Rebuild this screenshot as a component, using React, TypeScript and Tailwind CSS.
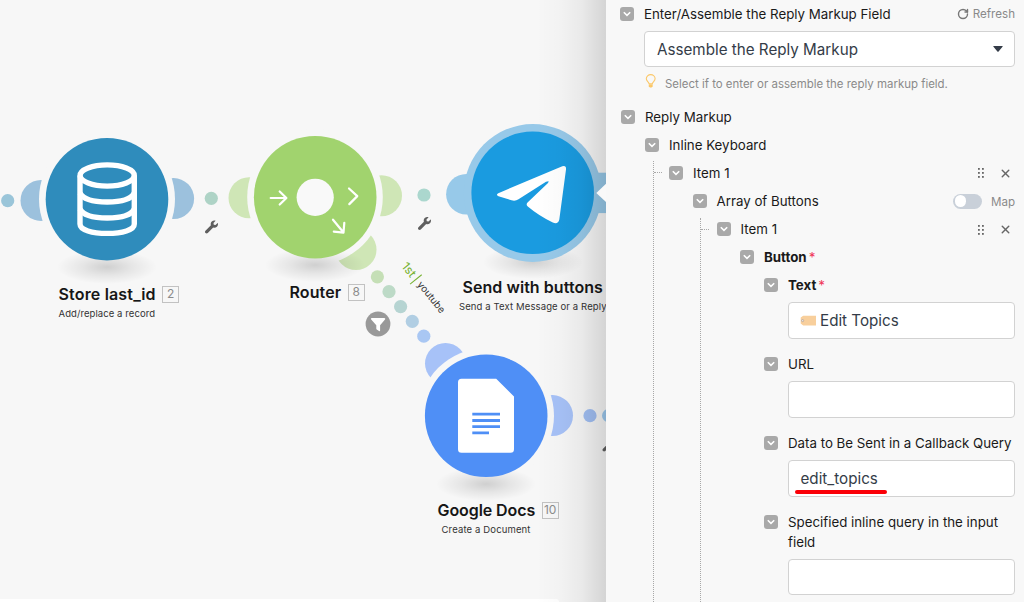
import React, { useState } from 'react';
import { X, RotateCw } from 'lucide-react';

interface ScenarioModule {
  id: number;
  name: string;
  note?: string;
  badge?: string;
  // position of the title block on the canvas
  labelClass: string;
  titleClass: string;
  noteClass?: string;
}

const modules: ScenarioModule[] = [
  {
    id: 2,
    name: 'Store last_id',
    note: 'Add/replace a record',
    badge: '2',
    labelClass: 'left-[58.5px] top-[284px]',
    titleClass: 'tracking-[0.17px]',
    noteClass: 'tracking-[0.08px]',
  },
  { id: 8, name: 'Router', badge: '8', labelClass: 'left-[289.5px] top-[282px]', titleClass: 'tracking-[0.1px]' },
  {
    id: 9,
    name: 'Send with buttons',
    note: 'Send a Text Message or a Reply',
    labelClass: 'left-[459px] top-[277px]',
    titleClass: 'pl-[3.5px] tracking-[0.05px]',
    noteClass: 'tracking-[0.12px]',
  },
  {
    id: 10,
    name: 'Google Docs',
    note: 'Create a Document',
    badge: '10',
    labelClass: 'left-[437.5px] top-[500px]',
    titleClass: 'tracking-[-0.08px]',
    noteClass: 'pl-[4px] tracking-[0.14px]',
  },
];

const dots = [
  { x: 7.7, y: 200.7, color: '#9ac5d9' },
  { x: 211.3, y: 198.3, color: '#aed3c6' },
  { x: 424, y: 195, color: '#abd7ce' },
  { x: 377.4, y: 276.8, color: '#c5dfb6' },
  { x: 389, y: 291.7, color: '#bddac7' },
  { x: 400.6, y: 306.6, color: '#b6d4d2' },
  { x: 412.3, y: 321.4, color: '#b1cee3' },
  { x: 423.8, y: 336.2, color: '#a9c7f3' },
  { x: 590, y: 415.7, color: '#a1bff3' },
  { x: 608.6, y: 415.7, color: '#9cc8ee' },
];

const Wrench = ({ x, y }: { x: number; y: number }) => (
  <g transform={`translate(${x} ${y}) scale(0.0254)`} fill="#5f5f5f">
    <path d="M507.73 109.1c-2.24-9.03-13.54-12.09-20.12-5.51l-74.36 74.36-67.88-11.31-11.31-67.88 74.36-74.36c6.62-6.62 3.43-17.9-5.66-20.16-47.38-11.74-99.55.91-136.58 37.93-39.64 39.64-50.55 97.1-34.05 147.2L18.74 402.76c-24.99 24.99-24.99 65.51 0 90.5 24.99 24.99 65.51 24.99 90.5 0l213.21-213.21c50.12 16.71 107.47 5.68 147.37-34.22 37.07-37.07 49.7-89.32 37.91-136.73z" />
  </g>
);

const Shadow = ({ x, y }: { x: number; y: number }) => (
  <ellipse cx={x} cy={y} rx={50} ry={17} fill="url(#ground)" />
);

const ScenarioDrawing = () => (
  <svg width="606" height="602" viewBox="0 0 606 602" className="block">
    <defs>
      <radialGradient id="ground">
        <stop offset="0" stopColor="#000" stopOpacity="0.16" />
        <stop offset="0.5" stopColor="#000" stopOpacity="0.07" />
        <stop offset="1" stopColor="#000" stopOpacity="0" />
      </radialGradient>
    </defs>

    {/* Data store */}
    <circle cx={41} cy={200.4} r={20.5} fill="#9cc1dd" />
    <circle cx={173.6} cy={198.6} r={20.5} fill="#9cc1dd" />
    <circle cx={107} cy={199} r={68} fill="#f7f7f7" />
    <Shadow x={107} y={267} />
    <circle cx={107} cy={199.2} r={61.3} fill="#2f8cbc" />
    <g stroke="#fff" strokeWidth={5.4} fill="none">
      <path d="M80 175.5V224c0 6 12 9.400 27.200 9.400s27.100-3.400 27.100-9.400V175.500" />
      <ellipse cx={107.2} cy={175.5} rx={27.1} ry={10.6} />
      <path d="M80 193c3 6 13 9 27.200 9s24.100-3 27.100-9M80 209c3 6 13 9 27.200 9s24.100-3 27.100-9" />
    </g>

    {/* Router */}
    <circle cx={249} cy={197.8} r={20.5} fill="#cfe6b6" />
    <circle cx={381.5} cy={195.7} r={20.5} fill="#cfe6b6" />
    <circle cx={356} cy={249.6} r={20.5} fill="#cfe6b6" />
    <circle cx={315} cy={197} r={67.8} fill="#f7f7f7" />
    <Shadow x={315} y={265} />
    <circle cx={315.2} cy={197.2} r={61.3} fill="#a1d36e" />
    <circle cx={315.2} cy={197.3} r={18.6} fill="#f9f9f9" />
    <g stroke="#fff" strokeWidth={2.2} fill="none" strokeLinecap="round" strokeLinejoin="round">
      <path d="M270.700 198H286M279.700 191.500l6.700 6.500-6.700 6.500" />
      <path d="M349 188.500l8.300 7.600-8 8" />
      <path d="M333 219.700l10.300 12.600M333.800 231.600l9.700 1 .8-9.700" />
    </g>

    {/* Google Docs */}
    <circle cx={445.5} cy={363.5} r={20.5} fill="#a7c2f8" />
    <circle cx={552.5} cy={415.6} r={20.5} fill="#a7c2f8" />
    <circle cx={486.2} cy={415.8} r={67.8} fill="#f7f7f7" />
    <Shadow x={486} y={484} />
    <circle cx={486.2} cy={415.8} r={61.3} fill="#4f8ff6" />
    <path d="M461.500 378.700h34.700L514 396.500v52.800a3.500 3.500 0 0 1-3.500 3.500h-49a3.500 3.500 0 0 1-3.500-3.500v-67.100a3.500 3.500 0 0 1 3.500-3.500z" fill="#fff" />
    <path d="M472.300 412.700h27.700v2.900h-27.700zM472.300 419h27.700v2.900h-27.700zM472.300 425.200h27.700v2.900h-27.700zM472.300 431.400h16.700v2.900h-16.700z" fill="#4f8ff6" />

    {/* Telegram */}
    <Shadow x={533} y={262} />
    <circle cx={466.4} cy={194.2} r={20.3} fill="#97c9e9" />
    <path d="M590 172.700h16v40.400h-16z" fill="#97c9e9" />
    <circle cx={532.7} cy={193} r={68.9} fill="#97c9e9" />
    <circle cx={532.7} cy={192.8} r={61.3} fill="#1a9be0" />
    <path
      d="M498.300 193.200L562.300 166.200Q566.500 165 566 169.500L559.300 219.500Q558 225 552.800 222.600Q539 216 527.800 206.600Q525.500 204.500 527.800 202.300L548 183Q550 180 546 181.800L518.500 199.300Q515.500 201.300 511.500 200.300L498.500 196.300Q495.500 194.700 498.300 193.200Z"
      fill="#fff"
    />

    {dots.map((dot) => (
      <circle key={`${dot.x}-${dot.y}`} cx={dot.x} cy={dot.y} r={6.6} fill={dot.color} />
    ))}

    <Wrench x={205} y={220.5} />
    <Wrench x={418} y={217} />
    <Wrench x={602.5} y={438.5} />

    {/* Route filter */}
    <circle cx={378} cy={324} r={12.4} fill="#999" />
    <path d="M371.800 318h12.500c.9 0 1.200.9.700 1.500l-4.900 5.700v5.300c0 .6-.6.900-1.100.5l-2.300-1.600a1 1 0 0 1-.4-.8v-3.400l-5.100-5.700c-.6-.6-.2-1.500.6-1.500z" fill="#fff" />
  </svg>
);

const Canvas = () => (
  <div className="relative h-full w-[606px] shrink-0 overflow-hidden">
    <ScenarioDrawing />

    {modules.map((m) => (
      <div key={m.id} className={`absolute whitespace-nowrap ${m.labelClass}`}>
        <div className="flex h-5 items-center gap-[6.5px]">
          <span className={`text-[16px] font-semibold text-[#161616] ${m.titleClass}`}>{m.name}</span>
          {m.badge && (
            <span className="flex h-[17px] w-[17px] items-center justify-center border border-[#c2c2c2] text-[12px] text-[#8c8c8c]">
              {m.badge}
            </span>
          )}
        </div>
        {m.note && (
          <div className={`mt-[3px] text-[9.5px] leading-[14px] text-[#333] ${m.noteClass ?? ''}`}>{m.note}</div>
        )}
      </div>
    ))}

    {/* Route label */}
    <div className="absolute left-[404px] top-[256px] flex h-4 origin-[0_50%] rotate-[51deg] items-center gap-1 whitespace-nowrap">
      <span className="text-[12px] text-[#75b12f]">1st</span>
      <span className="h-[15px] w-px bg-[#75b12f]" />
      <span className="text-[9.8px] text-[#333]">youtube</span>
    </div>

    <div className="absolute bottom-0 left-0 h-[3px] w-[559px] rounded-tr-[6px] bg-white" />
    {/* shade cast by the settings panel */}
    <div className="absolute inset-y-0 right-0 w-[70px] bg-[linear-gradient(to_right,rgba(0,0,0,0)_0%,rgba(0,0,0,0.02)_35%,rgba(0,0,0,0.055)_65%,rgba(0,0,0,0.14)_100%)]" />
    <svg width="10" height="20" viewBox="0 0 10 20" className="absolute right-0 top-[183px]">
      <path d="M.3 9.900L10 .7v18.400z" fill="#f9f9f9" />
    </svg>
  </div>
);

const Toggle = () => (
  <span className="flex h-[14px] w-[14px] shrink-0 items-center justify-center rounded-[3px] bg-[#a9a9a9]">
    <svg width="8" height="6" viewBox="0 0 8 6">
      <path d="M0.800 1.300L4 4.400l3.200-3.100" stroke="#fff" strokeWidth="1.600" fill="none" />
    </svg>
  </span>
);

interface RowProps {
  label: string;
  className: string;
  required?: boolean;
  children?: React.ReactNode;
}

const Row = ({ label, className, required = false, children }: RowProps) => (
  <div className={`flex items-center ${className}`}>
    <Toggle />
    <span
      className={`ml-[10px] whitespace-nowrap pt-px text-[13.3px] leading-[19px] text-[#1a1a1a] ${required ? 'font-bold' : ''}`}
    >
      {label}
    </span>
    {required && <span className="ml-[2px] pt-px text-[13.5px] leading-none text-[#f0395a]">*</span>}
    {children}
  </div>
);

const ItemActions = () => (
  <div className="ml-auto mr-[3px] flex items-center gap-[14px] pt-px">
    <svg width="8" height="12" viewBox="0 0 8 12" fill="#666">
      {[1, 5, 9].map((y) => (
        <g key={y}>
          <rect x="1" y={y} width="1.800" height="1.800" />
          <rect x="5" y={y} width="1.800" height="1.800" />
        </g>
      ))}
    </svg>
    <X size={13} strokeWidth={2.6} className="text-[#666]" />
  </div>
);

const Input = ({ children, className = '' }: { children?: React.ReactNode; className?: string }) => (
  <div
    className={`flex h-[36.5px] items-center rounded-[4px] border border-[#d2d2d2] bg-white text-[15.2px] leading-6 text-[#343c48] ${className}`}
  >
    {children}
  </div>
);

const Branch = ({ className, children }: { className: string; children: React.ReactNode }) => (
  <div className={`mt-[3px] border-l border-dotted border-[#a8a8a8] ${className}`}>{children}</div>
);

const App = () => {
  const [mapped, setMapped] = useState(false);

  return (
    <div className="flex h-[602px] w-[1024px] overflow-hidden bg-[#f7f7f7] font-['Inter',sans-serif]">
      <Canvas />

      {/* Settings panel */}
      <div className="flex h-full w-[418px] flex-col bg-[#f8f8f8] pl-[14px] pr-[9px]">
        <Row label="Enter/Assemble the Reply Markup Field" className="h-7">
          <div className="ml-auto flex items-center gap-[4px] text-[11.6px] text-[#8a8a8a]">
            <RotateCw size={12} strokeWidth={2.8} className="text-[#777]" />
            <span className="pt-px leading-[18px]">Refresh</span>
          </div>
        </Row>
        <Input className="ml-6 mt-[3px] justify-between pl-3 pr-[11px]">
          <span className="pt-px">Assemble the Reply Markup</span>
          <svg width="10" height="6" viewBox="0 0 10 6">
            <path d="M.8 0h8.400q1 0 .3.800L5.600 5.400q-.6.600-1.200 0L.5.800Q-.2 0 .8 0z" fill="#343c48" />
          </svg>
        </Input>
        <div className="ml-6 flex h-[31.5px] items-center gap-[8px] text-[11.45px] text-[#8a8a8a]">
          <svg width="12" height="14" viewBox="0 0 12 14" className="-mt-1 ml-px" fill="none" stroke="#fbc86a">
            <path d="M4 9.800C3.800 8 1.300 7 1.300 4.800a4.400 4.200 0 0 1 8.800 0C10.100 7 7.600 8 7.400 9.800z" strokeWidth="1.100" />
            <path d="M4 10.600h3.400v1.700l-.8.900H4.800l-.8-.9z" fill="#fbc86a" strokeWidth=".5" />
          </svg>
          <span className="pt-[2.5px] leading-[18px]">Select if to enter or assemble the reply markup field.</span>
        </div>

        <Row label="Reply Markup" className="ml-px mt-[4.5px] h-7" />
        <Row label="Inline Keyboard" className="ml-[25px] h-[27px]" />

        <Branch className="ml-[33px] flex-1">
          <div className="flex h-[23px] items-center">
            <span className="w-2 border-t border-dotted border-[#a8a8a8]" />
            <Row label="Item 1" className="ml-[7px] flex-1">
              <ItemActions />
            </Row>
          </div>
          <Row label="Array of Buttons" className="ml-[38.5px] mt-[3px] h-7">
            <button
              onClick={() => setMapped(!mapped)}
              className={`ml-auto flex h-[15px] w-[29px] items-center rounded-full bg-[#c9d0d9] px-[2px] ${mapped ? 'justify-end' : ''}`}
            >
              <span className="h-[11.5px] w-[11.5px] rounded-full bg-white" />
            </button>
            <span className="ml-[9px] pt-px text-[11.6px] leading-[18px] text-[#8a8a8a]">Map</span>
          </Row>

          <Branch className="ml-[46px] h-[384px]">
            <div className="flex h-[22px] items-center">
              <span className="w-2 border-t border-dotted border-[#a8a8a8]" />
              <Row label="Item 1" className="ml-[7.5px] flex-1">
                <ItemActions />
              </Row>
            </div>
            <Row label="Button" required className="ml-[39px] mt-[3px] h-7" />

            <div className="ml-[63px]">
              <Row label="Text" required className="h-7" />
              <Input className="ml-6 mt-[3px] pl-[11px]">
                <svg width="16" height="11" viewBox="0 0 16 11" className="mr-[4px]">
                  <path d="M3.200.800H16v9.600H3.200L.700 8.600V2.600z" fill="#f8cf9c" />
                  <circle cx="2.600" cy="5.600" r="1.100" fill="#e9e4e4" stroke="#a99a94" strokeWidth=".600" />
                </svg>
                <span className="pt-px">Edit Topics</span>
              </Input>

              <Row label="URL" className="mt-[11.5px] h-7" />
              <Input className="ml-6 mt-[3px]" />

              <Row label="Data to Be Sent in a Callback Query" className="mt-[11.5px] h-7" />
              <Input className="relative ml-6 mt-[3px] pl-[11.5px]">
                <span className="pt-px">edit_topics</span>
                <span className="absolute left-[6px] top-[29px] h-[4px] w-[92px] rounded-full bg-[#fb0007]" />
              </Input>

              <div className="mt-[15px] flex items-start">
                <span className="mt-[3px]">
                  <Toggle />
                </span>
                <span className="ml-[10px] w-[220px] pt-[0.5px] text-[13.3px] leading-5 text-[#1a1a1a]">
                  Specified inline query in the input field
                </span>
              </div>
              <Input className="ml-6 mt-[6.5px]" />
            </div>
          </Branch>
        </Branch>
      </div>
    </div>
  );
};

export default App;
